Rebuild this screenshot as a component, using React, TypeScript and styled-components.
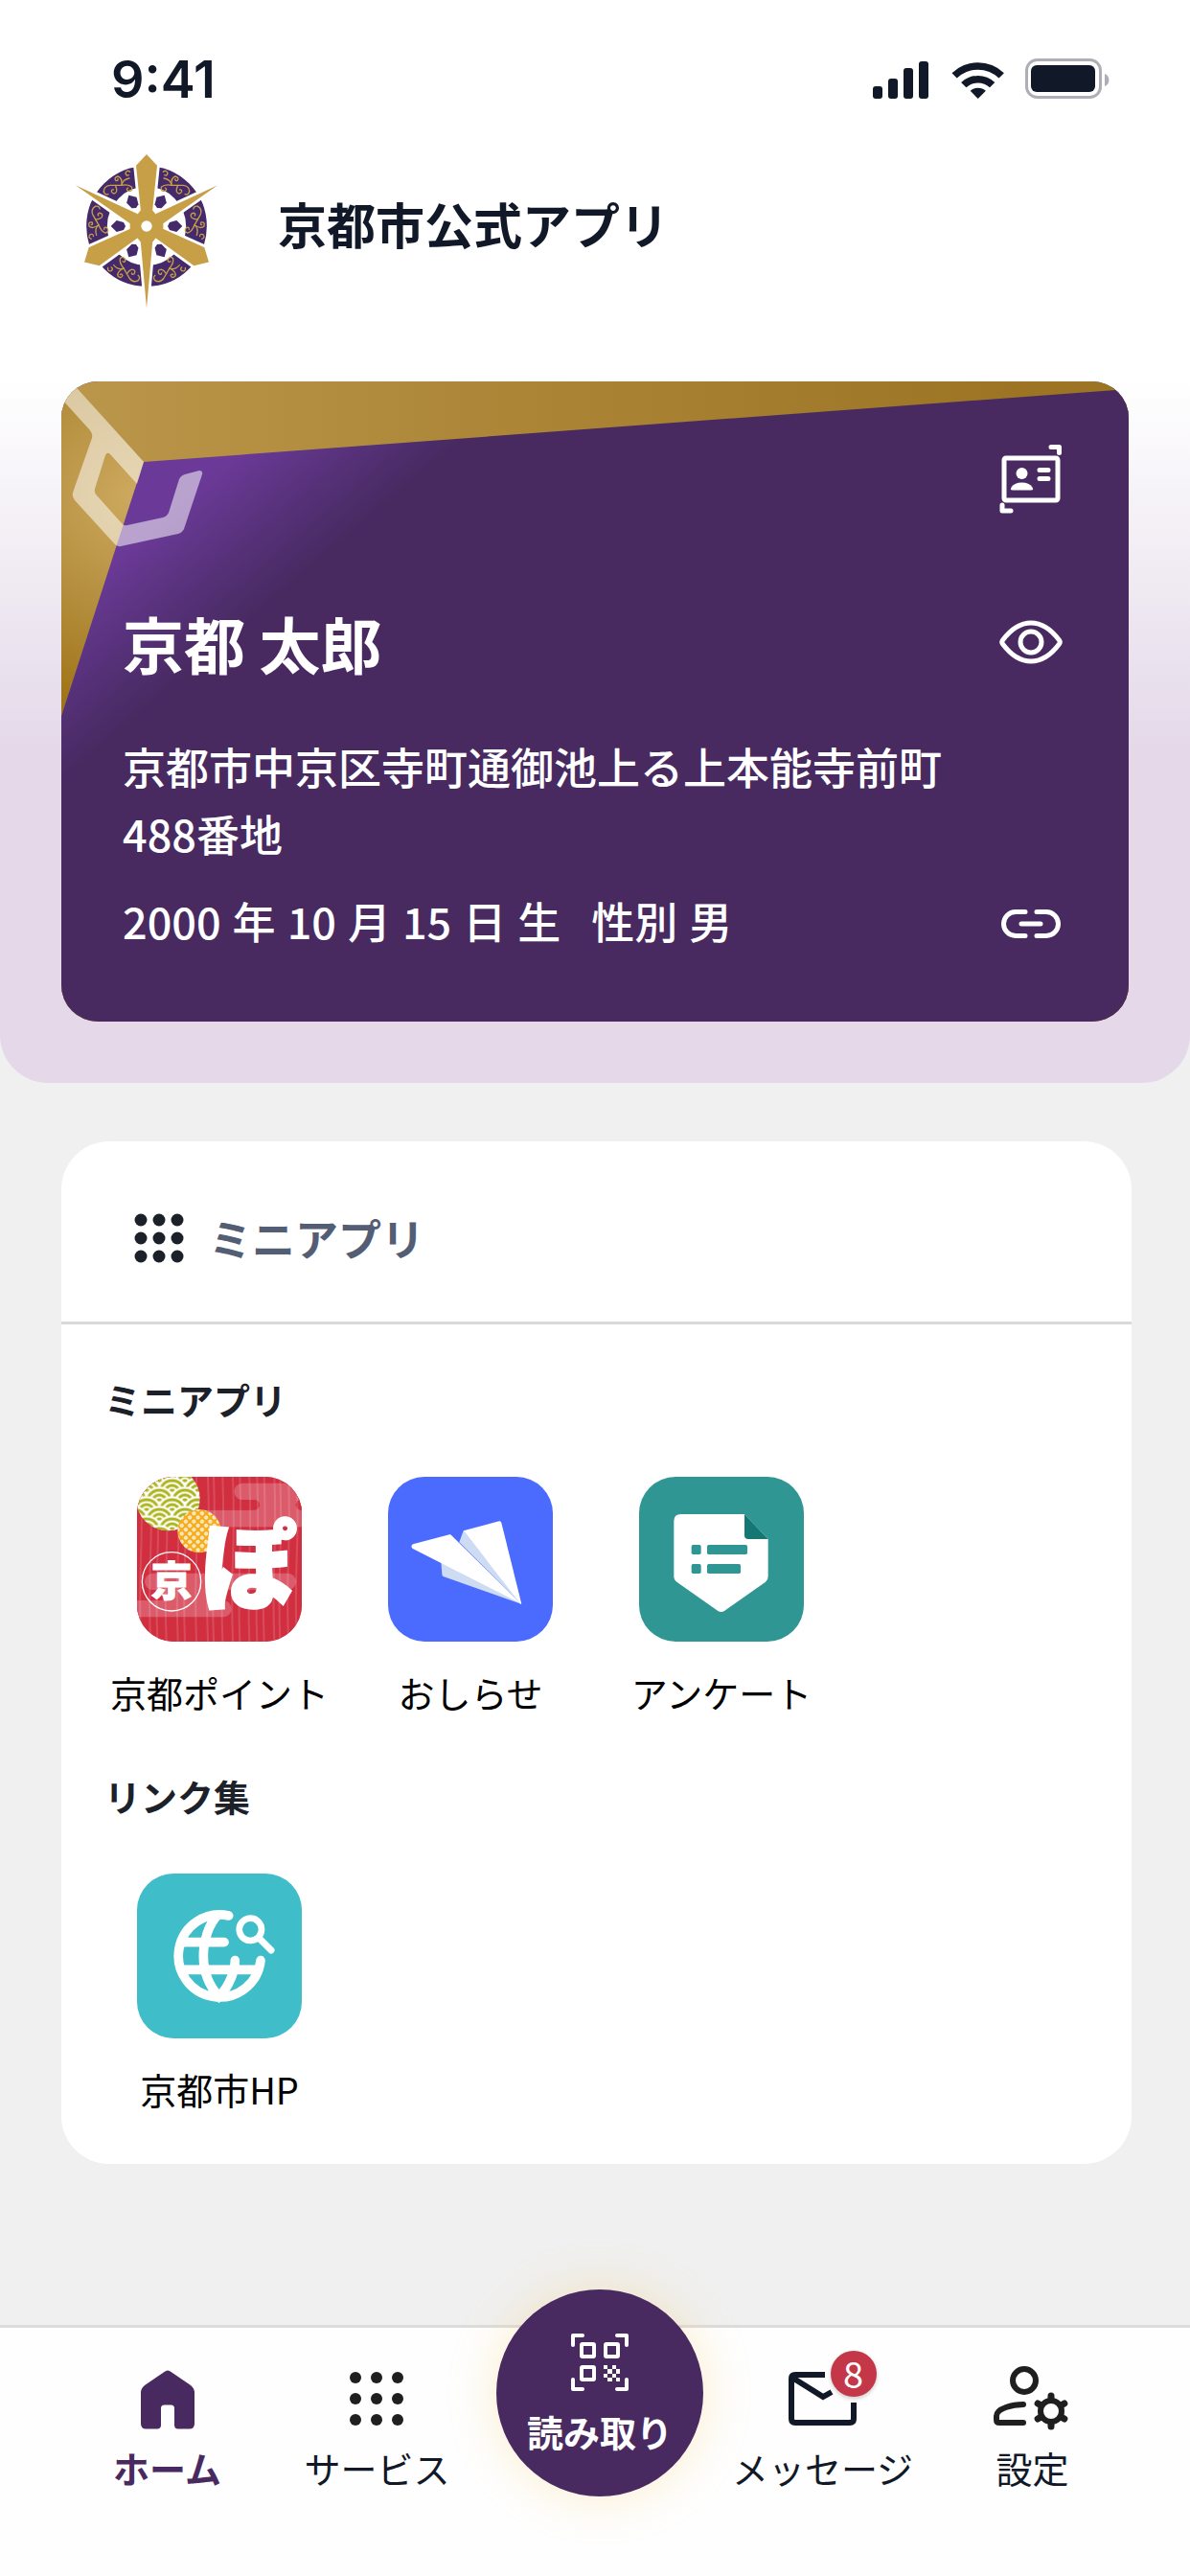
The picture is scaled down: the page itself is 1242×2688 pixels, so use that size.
import React from 'react';
import styled, { createGlobalStyle } from 'styled-components';

const purple = '#482a61';
const gold = '#c79f47';

const DotsIcon = ({ size, pitch, radius }: { size: number; pitch: number; radius: number }): JSX.Element => (
  <svg width={size} height={size} viewBox={`${-size / 2} ${-size / 2} ${size} ${size}`} fill="currentColor">
    {[-pitch, 0, pitch].map((y) =>
      [-pitch, 0, pitch].map((x) => <circle key={`${x}-${y}`} cx={x} cy={y} r={radius} />)
    )}
  </svg>
);

const StatusIcons = (): JSX.Element => (
  <svg width="250" height="44" viewBox="0 0 250 44" fill="#111827">
    <rect x="1" y="30" width="10" height="13" rx="3" />
    <rect x="17" y="22" width="10" height="21" rx="3" />
    <rect x="33" y="11" width="10" height="32" rx="3" />
    <rect x="49" y="4" width="10" height="39" rx="3" />
    <path d="M83.5 16.2 A39 39 0 0 1 137.9 16.2 L132.6 21.6 A31.5 31.5 0 0 0 88.7 21.6 Z" />
    <path d="M93.1 26 A25.5 25.5 0 0 1 128.3 26 L123 31.3 A18 18 0 0 0 98.4 31.3 Z" />
    <path d="M102.7 34.8 A12 12 0 0 1 118.9 34.8 L110.7 43 Z" />
    <rect x="161.5" y="2.5" width="77" height="39" rx="11" fill="none" stroke="#aeafb6" strokeWidth="3" />
    <rect x="166" y="8" width="67" height="28" rx="6" />
    <path d="M243 17 a7 7 0 0 1 0 13 z" fill="#aeafb6" />
  </svg>
);

const Scroll = (): JSX.Element => (
  <g fill="none" stroke={gold} strokeWidth="4" strokeLinecap="round">
    <path d="M52 -170 q10 -8 14 4 q-2 10 -10 6 M54 -150 q22 4 24 22 q22 0 36 0 q20 2 20 20" />
    <path d="M78 -128 q-22 -4 -32 6 q-2 14 12 12 q8 -6 0 -10 M78 -128 q-2 -24 12 -28 q14 4 6 14 q-8 0 -6 -6" />
    <path d="M98 -128 q-6 12 -4 20 q8 12 16 0 q0 -8 -6 -6 M134 -108 q-4 12 -14 8" />
  </g>
);

const Emblem = (): JSX.Element => (
  <svg width="192" height="192" viewBox="-288 -288 576 576" role="img" aria-label="京都市">
    <circle r="156" fill="none" stroke="#44296b" strokeWidth="65" />
    {[0, 120, 240].map((deg) => (
      <g key={deg} transform={`rotate(${deg})`}>
        <Scroll />
        <g transform="scale(-1 1)">
          <Scroll />
        </g>
      </g>
    ))}
    <g stroke="#fff" strokeWidth="17" fill="#fff">
      {[0, 120, 240].map((deg) => (
        <path key={deg} transform={`rotate(${deg})`} d="M0 -225 L33 -190 L18 -45 L0 0 L-18 -45 L-33 -190 Z M-19 45 L0 257 L19 45 L0 0 Z" />
      ))}
    </g>
    <g fill="#44296b">
      {[30, 90, 150, 210, 270, 330].map((deg) => (
        <path key={deg} transform={`rotate(${deg})`} d="M-12 -72 L0 -66 L12 -72 L18 -94 L0 -112 L-18 -94 Z" />
      ))}
    </g>
    <g fill={gold}>
      <path d="M-18 -50 H18 L52 -9 V9 L18 50 H-18 L-52 9 V-9 Z" />
      {[0, 120, 240].map((deg) => (
        <path key={deg} transform={`rotate(${deg})`} d="M0 -225 L33 -190 L18 -45 L0 0 L-18 -45 L-33 -190 Z M-19 45 L0 257 L19 45 L0 0 Z" />
      ))}
    </g>
    <circle r="17" fill="#fff" />
  </svg>
);

const CardArt = (): JSX.Element => (
  <CardBackdrop viewBox="0 0 1114 668" preserveAspectRatio="xMinYMin slice" aria-hidden="true">
    <defs>
      <linearGradient id="goldTop" gradientUnits="userSpaceOnUse" x1="0" y1="0" x2="1000" y2="0">
        <stop offset="0" stopColor="#bb974b" />
        <stop offset="0.5" stopColor="#ab8436" />
        <stop offset="1" stopColor="#9c7424" />
      </linearGradient>
      <radialGradient id="goldSide" gradientUnits="userSpaceOnUse" cx="75" cy="120" r="230">
        <stop offset="0" stopColor="#cda95f" />
        <stop offset="0.5" stopColor="#b58f3f" />
        <stop offset="1" stopColor="#9f7316" />
      </radialGradient>
      <linearGradient id="violet" gradientUnits="userSpaceOnUse" x1="114" y1="133" x2="206" y2="241">
        <stop offset="0" stopColor="#6b3a98" />
        <stop offset="0.5" stopColor="#58327c" />
        <stop offset="1" stopColor={purple} />
      </linearGradient>
    </defs>
    <rect width="1114" height="668" fill="url(#goldTop)" />
    <path d="M-8 -20 L86 84 L0 349 V0 Z" fill="url(#goldSide)" />
    <path d="M86 84 L1114 8 V668 H0 V349 Z" fill="url(#violet)" />
    <path
      d="M0 -11 L86 84 L79 107 L51 76 Q48 73 46 77 L35 112 Q34 116 37 119 L63 148 Q65 151 69 150 L106 142 Q110 141 112 137 L123 102 Q125 98 129 97 L144 93 Q148 93 147 97 L128 154 Q126 158 122 159 L62 172 Q58 173 55 169 L14 124 Q11 120 12 116 L32 59 Q33 55 30 51 L-10 7 Z"
      fill="#fff"
      opacity="0.53"
    />
  </CardBackdrop>
);

const IdCardIcon = (): JSX.Element => (
  <LineIcon viewBox="0 0 76 76">
    <rect x="10" y="16" width="56" height="44" rx="2" />
    <path d="M59 4.5 H67.5 V10.5 M8 65 V71 H17" />
    <path d="M47 28.5 H56 M47 37.5 H56" />
    <circle cx="28.5" cy="32" r="6" fill="#fff" stroke="none" />
    <path d="M19 49.5 Q16 49.5 17.5 46.5 Q21 41.5 28.5 41.5 Q36 41.5 39.5 46.5 Q41 49.5 38 49.5 Z" fill="#fff" stroke="none" />
  </LineIcon>
);

const EyeIcon = (): JSX.Element => (
  <LineIcon viewBox="0 0 76 76">
    <path d="M8.5 36 C16 26 26 18 38 18 S60 26 67.5 36 Q69 38 67.5 40 C60 50 50 58 38 58 S16 50 8.5 40 Q7 38 8.5 36 Z" />
    <circle cx="38" cy="38" r="11" />
  </LineIcon>
);

const LinkIcon = (): JSX.Element => (
  <LineIcon viewBox="0 0 76 76">
    <path d="M32 25.5 H22 A12.5 12.5 0 0 0 22 50.5 H32 M44 25.5 H54 A12.5 12.5 0 0 1 54 50.5 H44 M28 38 H48" />
  </LineIcon>
);

const PointArt = (): JSX.Element => (
  <svg viewBox="0 0 516 516">
    <defs>
      <pattern id="waves" width="80" height="60" patternUnits="userSpaceOnUse" patternTransform="translate(-10 -10)">
        <rect width="80" height="60" fill="#fff" />
        {[
          [0, 30], [80, 30], [40, 60], [0, 90], [80, 90], [40, 120],
        ].map(([x, y]) => (
          <g key={`${x}-${y}`} stroke="#acb41c" strokeWidth="9" fill="#fff">
            <circle cx={x} cy={y} r="45" stroke="#fff" />
            <circle cx={x} cy={y} r="38" />
            <circle cx={x} cy={y} r="23" />
            <circle cx={x} cy={y} r="8" />
          </g>
        ))}
      </pattern>
      <pattern id="rings" width="18" height="18" patternUnits="userSpaceOnUse" patternTransform="rotate(45)">
        <rect width="18" height="18" fill="#f6ab19" />
        <circle cx="9" cy="9" r="6" fill="#fff" />
        <circle cx="9" cy="9" r="2" fill="#f6ab19" />
      </pattern>
    </defs>
    <rect width="516" height="516" fill="#d12f41" />
    <g fill="#db5b6c">
      <rect x="304" y="20" width="260" height="52" rx="26" />
      <rect x="360" y="70" width="150" height="36" />
      <rect x="140" y="104" width="400" height="53" />
      <rect x="24" y="302" width="474" height="52" rx="26" />
      <rect x="80" y="352" width="180" height="37" />
      <rect x="-40" y="387" width="336" height="52" rx="26" />
    </g>
    <g fill="#d12f41">
      <rect x="200" y="72" width="184" height="32" rx="16" />
      <rect x="497" y="72" width="60" height="32" rx="16" />
    </g>
    <g stroke="#fff" strokeWidth="6" opacity="0.14">
      {[12, 42, 64, 92, 128, 150, 186, 222, 240, 268, 300, 322, 352, 376, 398, 430, 448, 474, 500].map((x) => (
        <path key={x} d={`M${x} 0 q5 130 0 258 t0 258`} fill="none" />
      ))}
    </g>
    <circle cx="97" cy="69" r="100" fill="url(#waves)" />
    <circle cx="195" cy="170" r="68" fill="url(#rings)" />
    <circle cx="108" cy="328" r="92" fill="none" stroke="#fff" strokeWidth="4" />
    <g fill="#fff" stroke="#fff" fontFamily="'Noto Sans CJK JP', sans-serif" fontWeight="900">
      <text x="108" y="376" fontSize="128" strokeWidth="3" textAnchor="middle">京</text>
      <text x="350" y="390" fontSize="296" strokeWidth="10" textAnchor="middle">ぽ</text>
    </g>
  </svg>
);

const PlaneArt = (): JSX.Element => (
  <svg viewBox="0 0 516 516">
    <path d="M236 169 L223 205 L417 398 Z M166 266 L169 305 Q169 311 175 313 L417 398 Z" fill="#cddcf3" />
    <path d="M78 211 L195 180 L417 398 L76 224 Q70 215 78 211 Z" fill="#fff" />
    <path d="M236 169 L348 139 Q353 138 355 144 L418 398 L415 398 Z" fill="#fff" />
  </svg>
);

const SurveyArt = (): JSX.Element => (
  <svg viewBox="0 0 516 516">
    <path d="M131 117 H330 L404 195 V312 Q404 322 396 329 L267 420 Q257 426 247 420 L119 330 Q109 323 109 312 V139 Q109 117 131 117 Z" fill="#fff" />
    <path d="M330 117 L404 195 H342 Q330 195 330 183 Z" fill="#157773" />
    <g fill="#309694">
      <rect x="164" y="213" width="30" height="30" rx="5" />
      <rect x="213" y="213" width="126" height="30" rx="5" />
      <rect x="164" y="273" width="30" height="30" rx="5" />
      <rect x="213" y="273" width="105" height="30" rx="5" />
    </g>
  </svg>
);

const GlobeArt = (): JSX.Element => (
  <svg viewBox="0 0 516 516" fill="none" stroke="#fff" strokeWidth="29" strokeLinecap="round">
    <path d="M287 132 A129 129 0 1 0 387 272" />
    <path d="M252 131 C224 160 208 210 208 258 S224 350 257 385 C292 350 307 300 307 272" />
    <path d="M146 215 H273 M146 301 H372" />
    <circle cx="355" cy="175" r="35" strokeWidth="20" />
    <path d="M383 203 L420 240" strokeWidth="21" />
  </svg>
);

const HomeIcon = (): JSX.Element => (
  <svg width="76" height="76" viewBox="0 0 76 76" fill={purple}>
    <path d="M34.5 10 Q38 7 41.5 10 L62 24 Q66 27 66 32 V64 Q66 69.5 60.5 69.5 H49 Q45 69.5 45 65.5 V48 Q45 44.5 41.5 44.5 H34.5 Q31 44.5 31 48 V65.5 Q31 69.5 27 69.5 H15.5 Q10 69.5 10 64 V32 Q10 27 14 24 Z" />
  </svg>
);

const ScanIcon = (): JSX.Element => (
  <svg width="76" height="76" viewBox="0 0 76 76" fill="none" stroke="#fff" strokeWidth="4" strokeLinecap="round" strokeLinejoin="round">
    <path d="M10 20 V10 H20 M56 10 H66 V20 M10 56 V66 H20 M56 66 H66 V56" />
    <rect x="19" y="19" width="13" height="13" rx="1" />
    <rect x="44" y="19" width="13" height="13" rx="1" />
    <rect x="19" y="43" width="13" height="13" rx="1" />
    <path
      d="M42 41 h4 v4 h-4 z M51 41 h4 v4 h-4 z M46 45 h5 v5 h-5 z M55 45 h4 v5 h-4 z M42 50 h4 v4 h-4 z M51 50 h4 v4 h-4 z M46 54 h5 v4 h-5 z M55 54 h4 v4 h-4 z"
      fill="#fff"
      stroke="none"
    />
  </svg>
);

const MailIcon = (): JSX.Element => (
  <svg width="76" height="76" viewBox="0 0 76 76" fill="none" stroke="#111827" strokeWidth="6">
    <path d="M40 13 H9 Q5 13 5 17 V59 Q5 63 9 63 H66 Q70 63 70 59 V42 M6 16 L38 36 L47 31" />
  </svg>
);

const SettingsIcon = (): JSX.Element => (
  <svg width="76" height="76" viewBox="0 0 76 76" overflow="visible" fill="none" stroke="#1f1f1f" strokeWidth="6" strokeLinecap="round">
    <circle cx="30" cy="19" r="12" />
    <path d="M29 44 C18 44 1 48 1 56 V60 Q1 63 4 63 H29" />
    <circle cx="58" cy="51" r="11" />
    {[0, 60, 120, 180, 240, 300].map((deg) => (
      <path key={deg} transform={`rotate(${deg} 58 51)`} d="M58 38 V35" strokeWidth="7" />
    ))}
  </svg>
);

interface AppEntry {
  label: string;
  color: string;
  art: JSX.Element;
}

interface SectionEntry {
  heading: string;
  apps: AppEntry[];
}

const sections: SectionEntry[] = [
  {
    heading: 'ミニアプリ',
    apps: [
      { label: '京都ポイント', color: '#d12f41', art: <PointArt /> },
      { label: 'おしらせ', color: '#4b6bff', art: <PlaneArt /> },
      { label: 'アンケート', color: '#309694', art: <SurveyArt /> },
    ],
  },
  {
    heading: 'リンク集',
    apps: [{ label: '京都市HP', color: '#3fbdc8', art: <GlobeArt /> }],
  },
];

const birthday = ['2000', '年', '10', '月', '15', '日', '生'];
const gender = ['性別', '男'];

const App = (): JSX.Element => {
  return (
    <Page>
      <GlobalStyle />
      <Hero>
        <StatusBar>
          <Time>9:41</Time>
          <StatusIcons />
        </StatusBar>
        <Header>
          <Emblem />
          <Title>京都市公式アプリ</Title>
        </Header>
        <IdCard>
          <CardArt />
          <CardTop>
            <IconButton aria-label="カードを表示">
              <IdCardIcon />
            </IconButton>
          </CardTop>
          <CardRow>
            <Name>京都 太郎</Name>
            <IconButton aria-label="表示を切り替え">
              <EyeIcon />
            </IconButton>
          </CardRow>
          <Address>京都市中京区寺町通御池上る上本能寺前町488番地</Address>
          <CardRow>
            <Meta>
              <Words>
                {birthday.map((word) => (
                  <span key={word}>{word}</span>
                ))}
              </Words>
              <Words>
                {gender.map((word) => (
                  <span key={word}>{word}</span>
                ))}
              </Words>
            </Meta>
            <IconButton aria-label="リンク">
              <LinkIcon />
            </IconButton>
          </CardRow>
        </IdCard>
      </Hero>
      <Main>
        <Panel>
          <PanelHeader>
            <DotsIcon size={52} pitch={19} radius={6.5} />
            <PanelTitle>ミニアプリ</PanelTitle>
          </PanelHeader>
          <PanelBody>
            {sections.map(({ heading, apps }) => (
              <section key={heading}>
                <SectionTitle>{heading}</SectionTitle>
                <AppList>
                  {apps.map(({ label, color, art }) => (
                    <AppLink key={label} href="#">
                      <Tile $color={color}>{art}</Tile>
                      {label}
                    </AppLink>
                  ))}
                </AppList>
              </section>
            ))}
          </PanelBody>
        </Panel>
      </Main>
      <Nav>
        <NavItem href="#" $active>
          <HomeIcon />
          ホーム
        </NavItem>
        <NavItem href="#">
          <NavDots>
            <DotsIcon size={76} pitch={22} radius={6} />
          </NavDots>
          サービス
        </NavItem>
        <ScanButton>
          <ScanIcon />
          読み取り
        </ScanButton>
        <NavItem href="#">
          <BadgeWrap>
            <MailIcon />
            <Badge>8</Badge>
          </BadgeWrap>
          メッセージ
        </NavItem>
        <NavItem href="#">
          <SettingsIcon />
          設定
        </NavItem>
      </Nav>
    </Page>
  );
};

const GlobalStyle = createGlobalStyle`
  * {
    box-sizing: border-box;
  }
  body {
    margin: 0;
    background-color: #f0f0f0;
    font-family: 'Noto Sans CJK JP', sans-serif;
    color: #111827;
  }
  svg {
    display: block;
    flex: none;
  }
  a {
    color: inherit;
    text-decoration: none;
  }
  button {
    border: none;
    padding: 0;
    background: none;
    font: inherit;
    color: inherit;
  }
`;

const Page = styled.div`
  display: flex;
  flex-direction: column;
  min-height: 100vh;
`;

const Hero = styled.div`
  padding: 0 64px 64px;
  border-radius: 0 0 50px 50px;
  background: linear-gradient(#fff 35%, #f0ebf3 53%, #e4d8e9 70%);
`;

const StatusBar = styled.div`
  display: flex;
  align-items: center;
  justify-content: space-between;
  height: 140px;
  padding: 24px 18px 0 52px;
`;

const Time = styled.time`
  font-family: Inter, sans-serif;
  font-size: 54px;
  font-weight: 600;
`;

const Header = styled.header`
  display: flex;
  align-items: center;
  gap: 41px;
  margin: 0 0 66px -7px;
`;

const Title = styled.h1`
  margin: 0;
  padding-bottom: 6px;
  font-size: 51px;
  line-height: 72px;
`;

const IdCard = styled.section`
  position: relative;
  overflow: hidden;
  padding: 64px;
  border-radius: 38px;
  background-color: ${purple};
  color: white;
`;

const CardBackdrop = styled.svg`
  position: absolute;
  inset: 0;
  width: 100%;
  height: 100%;
`;

const CardTop = styled.div`
  position: relative;
  display: flex;
  justify-content: flex-end;
  margin-bottom: 94px;
`;

const CardRow = styled.div`
  position: relative;
  display: flex;
  justify-content: space-between;
`;

const IconButton = styled.button`
  width: 76px;
  height: 76px;
`;

const LineIcon = styled.svg`
  width: 76px;
  height: 76px;
  fill: none;
  stroke: white;
  stroke-width: 5;
  stroke-linecap: round;
  stroke-linejoin: round;
`;

const Name = styled.h2`
  margin: 0;
  font-size: 64px;
  line-height: 76px;
`;

const Address = styled.p`
  position: relative;
  margin: 57px 76px 21px 0;
  font-size: 45px;
  font-weight: 500;
  line-height: 70px;
`;

const Meta = styled.div`
  display: flex;
  gap: 32px;
  font-size: 45px;
  font-weight: 500;
  line-height: 70px;
`;

const Words = styled.div`
  display: flex;
  gap: 12px;
`;

const Main = styled.main`
  flex: 1;
  padding: 61px 61px 61px 64px;
`;

const Panel = styled.section`
  border-radius: 50px;
  background-color: white;
`;

const PanelHeader = styled.div`
  display: flex;
  align-items: center;
  gap: 26px;
  padding: 66px 76px 52px;
  border-bottom: 3px solid #d9d9d9;
  color: #1c2129;
`;

const PanelTitle = styled.h2`
  margin: 0;
  font-size: 45px;
  line-height: 70px;
  color: #535e75;
`;

const PanelBody = styled.div`
  display: flex;
  flex-direction: column;
  gap: 52px;
  padding: 50px 45px;
`;

const SectionTitle = styled.h3`
  margin: 0 0 53px;
  font-size: 38px;
  line-height: 56px;
  color: #1c2129;
`;

const AppList = styled.div`
  display: flex;
  flex-wrap: wrap;
  gap: 32px;
  padding-left: 5px;
`;

const AppLink = styled.a`
  display: flex;
  flex-direction: column;
  align-items: center;
  gap: 25px;
  width: 230px;
  font-size: 38px;
  line-height: 56px;
  color: black;
`;

const Tile = styled.span<{ $color: string }>`
  overflow: hidden;
  width: 172px;
  height: 172px;
  border-radius: 38px;
  background-color: ${(props) => props.$color};
`;

const Nav = styled.nav`
  display: grid;
  grid-template-columns: 1fr 1fr 246px 1fr 1fr;
  align-items: start;
  justify-items: center;
  height: 262px;
  padding: 36px 55px 0 65px;
  border-top: 3px solid #dcdcdc;
  background-color: #fefefe;
`;

const NavItem = styled.a<{ $active?: boolean }>`
  display: flex;
  flex-direction: column;
  align-items: center;
  gap: 6px;
  font-size: 38px;
  font-weight: ${(props) => (props.$active ? 700 : 400)};
  line-height: 56px;
  white-space: nowrap;
  color: ${(props) => (props.$active ? purple : '#111827')};
`;

const NavDots = styled.span`
  color: #1f1f1f;
`;

const ScanButton = styled.button`
  display: flex;
  flex-direction: column;
  align-items: center;
  gap: 6px;
  width: 216px;
  height: 216px;
  margin-top: -76px;
  padding-top: 38px;
  border-radius: 50%;
  background-color: ${purple};
  box-shadow: 0 0 50px rgba(250, 200, 90, 0.3);
  font-size: 38px;
  font-weight: 700;
  line-height: 56px;
  color: white;
`;

const BadgeWrap = styled.span`
  position: relative;
`;

const Badge = styled.span`
  position: absolute;
  top: -12px;
  right: -18px;
  width: 48px;
  height: 48px;
  border-radius: 50%;
  background-color: #c43748;
  box-shadow: 0 2px 4px rgba(0, 0, 0, 0.2);
  line-height: 46px;
  text-align: center;
  color: white;
`;

export default App;
